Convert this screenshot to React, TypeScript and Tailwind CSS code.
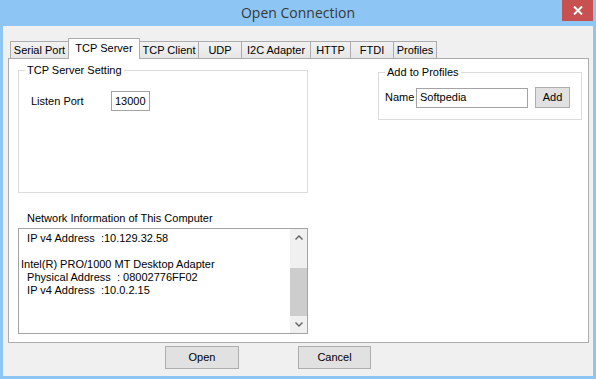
import React from 'react';

const tabs = [
  { label: 'Serial Port', w: 'w-[59px]' },
  { label: 'TCP Server', w: 'w-[72px]', active: true },
  { label: 'TCP Client', w: 'w-[60px]' },
  { label: 'UDP', w: 'w-[44px]' },
  { label: 'I2C Adapter', w: 'w-[70px]' },
  { label: 'HTTP', w: 'w-[41px]' },
  { label: 'FTDI', w: 'w-[44px]' },
  { label: 'Profiles', w: 'w-[44px]' },
];

const networkLines = [
  '  IP v4 Address  :10.129.32.58',
  ' ',
  'Intel(R) PRO/1000 MT Desktop Adapter',
  '  Physical Address  : 08002776FF02',
  '  IP v4 Address  :10.0.2.15',
];

const Chevron: React.FC<{ up?: boolean }> = ({ up }) => (
  <svg width="8" height="5" viewBox="0 0 8 5">
    <path
      d={up ? 'M0.5 4.5 L4 1 L7.5 4.5' : 'M0.5 0.5 L4 4 L7.5 0.5'}
      fill="none"
      stroke="#606060"
      strokeWidth="1.4"
    />
  </svg>
);

const Tab: React.FC<{ label: string; w: string; active?: boolean; first?: boolean }> = ({
  label,
  w,
  active,
  first,
}) => (
  <div
    className={`${w} ${first ? '' : '-ml-px'} flex items-center justify-center border border-b-0 border-[#acacac] ${
      active
        ? 'relative z-10 h-[21px] -mb-px bg-white pb-[2px]'
        : 'h-[17px] bg-gradient-to-b from-[#f2f2f2] to-[#e6e6e6]'
    }`}
  >
    {label}
  </div>
);

const App: React.FC = () => {
  return (
    <div className="w-[596px] h-[379px] bg-[#8dc6f5] flex flex-col font-['Liberation_Sans',Arial,sans-serif] text-[11px] text-black leading-[13px]">
      {/* title bar */}
      <div className="relative h-[26px] flex items-center justify-center">
        <span className="font-['Open_Sans',sans-serif] text-[14px] text-[#383838] leading-none">
          Open Connection
        </span>
        <div className="absolute right-[3px] top-0 w-[31px] h-[21px] bg-[#c75050] flex items-center justify-center">
          <svg width="10" height="9" viewBox="0 0 10 9">
            <path d="M1 0.5 L9 8.5 M9 0.5 L1 8.5" stroke="#fff" strokeWidth="2" />
          </svg>
        </div>
      </div>

      {/* client area */}
      <div className="flex-1 ml-[3px] mr-[3px] mb-[3px] bg-[#f0f0f0] flex flex-col">
        <div className="mt-[12px] ml-[7px] h-[20px] flex items-end">
          {tabs.map((t, i) => (
            <Tab key={t.label} label={t.label} w={t.w} active={t.active} first={i === 0} />
          ))}
        </div>

        <div className="ml-[5px] w-[581px] h-[285px] bg-white border border-[#acacac] flex">
          {/* left column */}
          <div className="ml-[9px] w-[290px] flex flex-col">
            <fieldset className="mt-[5px] h-[129px] border border-[#dcdcdc]">
              <legend className="ml-[6px] px-[2px] leading-[13px]">TCP Server Setting</legend>
              <div className="mt-[14px] pl-[12px] flex items-center">
                <span className="w-[80px]">Listen Port</span>
                <div className="w-[39px] h-[20px] border border-[#a3a3a3] px-[3px] flex items-center">
                  13000
                </div>
              </div>
            </fieldset>

            <div className="mt-[19px] pl-[9px]">Network Information of This Computer</div>

            <div className="mt-[3px] h-[106px] border border-[#a3a3a3] flex">
              <div className="flex-1 pl-[2px] pt-[3px] overflow-hidden">
                {networkLines.map((line, i) => (
                  <div key={i} className="whitespace-pre h-[13px]">
                    {line}
                  </div>
                ))}
              </div>
              <div className="w-[17px] bg-[#f0f0f0] flex flex-col">
                <div className="h-[17px] flex items-center justify-center">
                  <Chevron up />
                </div>
                <div className="flex-1" />
                <div className="h-[48px] bg-[#cdcdcd]" />
                <div className="h-[17px] flex items-center justify-center">
                  <Chevron />
                </div>
              </div>
            </div>
          </div>

          {/* right column */}
          <div className="ml-[70px]">
            <fieldset className="mt-[7px] w-[204px] h-[54px] border border-[#dcdcdc]">
              <legend className="ml-[6px] px-[2px] leading-[13px]">Add to Profiles</legend>
              <div className="mt-[8px] pl-[6px] h-[21px] flex items-center">
                <span className="w-[31px]">Name</span>
                <div className="w-[112px] h-[20px] border border-[#a3a3a3] px-[3px] flex items-center">
                  Softpedia
                </div>
                <button className="ml-[7px] w-[35px] h-[21px] bg-[#e1e1e1] border border-[#adadad] flex items-center justify-center">
                  Add
                </button>
              </div>
            </fieldset>
          </div>
        </div>

        <div className="mt-[3px] flex">
          <button className="ml-[162px] w-[74px] h-[23px] bg-[#e1e1e1] border border-[#adadad] flex items-center justify-center">
            Open
          </button>
          <button className="ml-[59px] w-[73px] h-[23px] bg-[#e1e1e1] border border-[#adadad] flex items-center justify-center">
            Cancel
          </button>
        </div>
      </div>
    </div>
  );
};

export default App;
